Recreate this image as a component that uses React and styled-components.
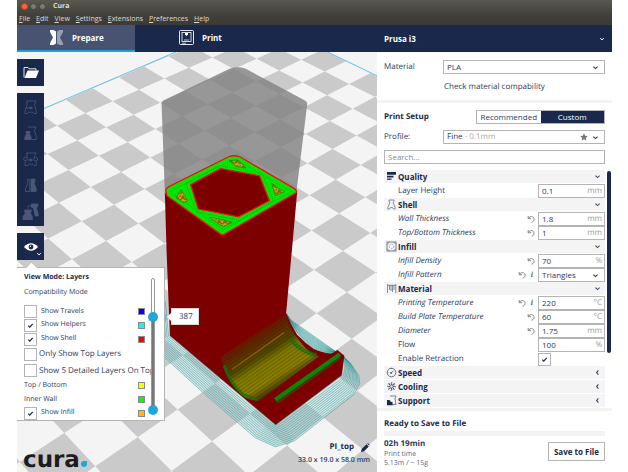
import React, { useState } from 'react';
import styled, { createGlobalStyle, css } from 'styled-components';

const navy = '#19284b';
const line = '#b4b4b4';

const Global = createGlobalStyle`
  * { box-sizing: border-box; }
  body { margin: 0; background: #fff; color: #2b3a5c; font: 8px/12px "Open Sans", "Noto Sans", sans-serif; text-rendering: geometricPrecision; }
  button, input, select { font: inherit; color: inherit; margin: 0; padding: 0; }
  svg { display: block; }
`;

const Window = styled.div`
  display: flex; flex-direction: column; min-height: 100vh; margin: 0 16px 0 17px;
`;
const TitleBar = styled.header`
  display: flex; align-items: center; gap: 2px; height: 13px; padding-left: 4px;
  background: linear-gradient(#5b594f, #45443d); color: #e2dfd8; font-weight: 700; font-size: 7px;
`;
const WindowButton = styled.button`
  width: 7px; height: 7px; border: 1px solid ${p => (p.$close ? '#c9421c' : '#45443e')}; border-radius: 50%;
  background: ${p => (p.$close ? '#f0683d' : '#7d7b72')};
`;
const AppName = styled.span` margin-left: 5px; `;
const MenuBar = styled.nav`
  display: flex; align-items: center; gap: 6px; height: 12px; padding-left: 2px;
  background: linear-gradient(#42413b, #3b3a36); color: #dfdbd2; font-size: 7px;
`;
const MenuItem = styled.button`
  border: 0; background: none; line-height: 12px;
  &::first-letter { text-decoration: underline; }
`;
const StageBar = styled.div`
  display: flex; height: 27px; background: ${navy}; color: #fff; font-weight: 700;
`;
const Tab = styled.button`
  display: flex; align-items: center; gap: ${p => (p.$active ? 9 : 8)}px; border: 0; font-weight: 700;
  width: 118px; padding-left: ${p => (p.$active ? 33 : 44)}px;
  background: ${p => (p.$active ? '#475371' : 'transparent')};
  border-bottom: 2px solid ${p => (p.$active ? '#1d9fda' : 'transparent')};
`;
const MachineButton = styled.button`
  display: flex; align-items: center; justify-content: space-between; width: 235px; margin-left: auto;
  padding: 0 7px; border: 0; background: none; font-weight: 700;
`;
const Main = styled.main` display: flex; flex: 1; `;

const Viewport = styled.section`
  position: relative; display: flex; flex-direction: column; flex: 1; min-width: 0; min-height: 420px;
  background: #f4f4f4; overflow: hidden;
`;
const Canvas = styled.svg` position: absolute; inset: 0; width: 100%; height: 100%; `;
const Overlay = styled.div`
  position: relative; display: flex; flex-direction: column; align-items: flex-start; gap: 7px; flex: 1; padding-top: 7px;
`;
const ToolGroup = styled.div` display: flex; flex-direction: column; padding: 1px 0 2px; background: ${navy}; `;
const ToolButton = styled.button`
  position: relative; display: flex; align-items: center; justify-content: center; width: 27px;
  height: ${p => (p.$main ? 27 : 26)}px; border: 0; background: ${navy}; color: ${p => (p.$main ? '#fff' : '#4b5775')};
`;
const Corner = styled.span` position: absolute; right: 2px; bottom: 3px; `;

const LayerRow = styled.div` display: flex; align-items: flex-start; `;
const LayerPanel = styled.section`
  position: relative; display: flex; width: 148px; height: 154px; background: #fff;
  border: 1px solid ${line}; border-left: 0;
  &::before {
    content: ''; position: absolute; left: 10px; top: -5px; width: 8px; height: 8px; background: #fff;
    border: 1px solid ${line}; border-width: 1px 0 0 1px; transform: rotate(45deg);
  }
`;
const LayerList = styled.div` display: flex; flex-direction: column; width: 134px; padding: 2px 0 0 7px; `;
const PanelTitle = styled.h2` margin: 0; font-size: 7px; line-height: 15px; color: ${navy}; `;
const PanelNote = styled.p` margin: 0 0 4px; font-size: 7px; line-height: 16px; `;
const LayerItem = styled.label`
  display: flex; align-items: center; gap: ${p => (p.$wide ? 2 : 4)}px; height: ${p => (p.$wide ? 17 : 14)}px;
  font-size: ${p => (p.$wide ? 8 : 7)}px; white-space: nowrap;
`;
const Swatch = styled.span`
  width: 7px; height: 7px; margin: 0 6px 0 auto; border: 1px solid #8a8a8a; background: ${p => p.$color};
`;
const Check = styled.input`
  appearance: none; flex: none; width: 13px; height: 13px; border: 1px solid ${line}; background: #fff;
  &:checked {
    background: #fff url('data:image/svg+xml,<svg xmlns="http://www.w3.org/2000/svg" viewBox="0 0 12 12"><path d="M3.5 6.200 5.200 7.800 8.400 4.200" fill="none" stroke="%2319284b" stroke-width="1.300"/></svg>') center / 11px 11px no-repeat;
  }
`;
const SliderBox = styled.div`
  position: relative; flex: none; width: 10px; height: 137px; margin: 10px 0 0 -3px;
  &::before {
    content: ''; position: absolute; inset: 0 3px 3px; border: 1px solid #999; border-radius: 2px;
    background: linear-gradient(#fff 0 38px, #777 38px);
  }
`;
const Range = styled.input`
  appearance: none; position: absolute; inset: 0; width: 10px; height: 100%; background: none;
  writing-mode: vertical-lr; direction: rtl; pointer-events: none;
  &::-webkit-slider-thumb {
    appearance: none; width: 10px; height: 10px; border-radius: 50%; background: #22a5dc; pointer-events: auto;
  }
`;
const LayerValue = styled.output`
  position: relative; margin: 41px 0 0 6px; padding: 0 7px; width: 28px; background: #fff; border: 1px solid #d8d8d8; line-height: 15px;
  &::before {
    content: ''; position: absolute; left: -5px; top: 3px; border: 5px solid transparent;
    border-left: 0; border-right-color: #fff;
  }
`;
const ViewFooter = styled.footer`
  display: flex; justify-content: space-between; align-items: flex-end; align-self: stretch; margin-top: auto; padding: 0 7px 2px 6px;
`;
const Logo = styled.div`
  display: flex; align-items: flex-end; font: 700 23px/24px "DejaVu Sans", sans-serif; color: #1c1c1e;
`;
const LogoDrop = styled.svg` margin: 0 0 5px 1px; `;
const ObjectInfo = styled.div`
  display: flex; flex-direction: column; align-items: flex-end; padding-bottom: 4px; font-size: 7px; font-weight: 600; line-height: 14px;
`;
const ObjectName = styled.span` display: flex; align-items: center; gap: 7px; font-size: 8px; font-weight: 700; color: ${navy}; `;

const Sidebar = styled.aside` display: flex; flex-direction: column; width: 235px; background: #fff; `;
const Block = styled.div`
  display: flex; flex-direction: column; padding: ${p => p.$pad}; gap: ${p => p.$gap || 0}px;
`;
const Divider = styled.hr` flex: none; width: 100%; height: 3px; margin: 0; border: 0; background: #f3f3f3; `;
const FieldRow = styled.div` display: flex; align-items: center; justify-content: space-between; height: 14px; `;
const fieldBox = css` border: 1px solid ${line}; background: #fff; border-radius: 0; `;
const Combo = styled.div` position: relative; display: flex; align-items: center; width: 162px; `;
const ComboSelect = styled.select`
  ${fieldBox} appearance: none; width: 100%; height: 14px; padding-left: 3px; color: ${p => (p.$pale ? 'transparent' : 'inherit')};
  option { color: #2b3a5c; }
`;
const ComboIcons = styled.span`
  position: absolute; right: 6px; display: flex; align-items: center; gap: 4px; pointer-events: none;
`;
const ComboText = styled.span`
  position: absolute; left: 4px; pointer-events: none;
  span { color: #aaa; }
`;
const TextLink = styled.a` margin-left: 60px; color: inherit; text-decoration: none; line-height: 14px; `;
const Heading = styled.h2` margin: 0; font-size: 8px; color: ${navy}; `;
const Segments = styled.div` display: flex; width: 129px; height: 14px; border: 1px solid ${line}; `;
const Segment = styled.button`
  flex: 1; border: 0; line-height: 12px; white-space: nowrap;
  background: ${p => (p.$on ? navy : '#fff')}; color: ${p => (p.$on ? '#fff' : 'inherit')};
`;
const Search = styled.input`
  ${fieldBox} width: 100%; height: 14px; padding: 0 3px 1px;
  &::placeholder { color: #888; }
`;
const SettingsArea = styled.div` display: flex; flex: 1; gap: 2px; padding: 0 1px 0 7px; `;
const Settings = styled.div` display: grid; grid-auto-rows: 1fr; flex: 1; `;
const Category = styled.button`
  display: flex; align-items: center; gap: 1px; border: 0; padding: 0 4px 0 2px; background: #f4f4f4;
  border-bottom: 1px solid #fff; color: ${navy}; font-weight: 700; line-height: 12px; text-align: left;
  > svg:last-child { margin-left: auto; color: #46536f; }
`;
const Setting = styled.div` display: flex; align-items: center; padding-left: 14px; `;
const SettingLabel = styled.label` flex: 1; font-style: ${p => (p.$changed ? 'italic' : 'normal')}; white-space: nowrap; `;
const IconButton = styled.button` display: flex; border: 0; background: none; margin-right: 3px; color: #777; `;
const Info = styled.span` margin: 0 5px 0 2px; font: italic 700 8px/12px "Liberation Serif", serif; color: #555; `;
const ValueBox = styled.div` position: relative; display: flex; align-items: center; align-self: stretch; width: 67px; `;
const ValueInput = styled.input` ${fieldBox} width: 100%; height: 100%; padding: 0 0 1px 3px; `;
const Unit = styled.span` position: absolute; right: 3px; color: #999; `;
const ScrollBar = styled.div` width: 4px; display: flex; flex-direction: column; padding-top: 1px; `;
const ScrollThumb = styled.div` height: 77%; border-radius: 2px; background: ${navy}; `;
const ProgressTrack = styled.div` height: 5px; background: #f3f3f3; `;
const FooterRow = styled.div` display: flex; justify-content: space-between; align-items: flex-start; `;
const Estimate = styled.div`
  display: flex; flex-direction: column; font-size: 7px; line-height: 9px; color: #5b6783;
  strong { font-size: 8px; line-height: 12px; color: #2b3a5c; }
`;
const SaveButton = styled.button`
  ${fieldBox} height: 19px; width: 57px; margin-top: 4px; font-weight: 700; color: ${navy}; white-space: nowrap;
`;

const Chevron = ({ left, size = 6 }) => (
  <svg width={size} height={size} viewBox="0 0 6 6" fill="none" stroke="currentColor" strokeWidth="1">
    <path d={left ? 'M3.800 1.200 2.200 3l1.600 1.800' : 'M1.200 2.200 3 3.900 4.800 2.200'} />
  </svg>
);
const Undo = () => (
  <svg width="8" height="8" viewBox="0 0 8 8" fill="none" stroke="currentColor" strokeWidth=".9">
    <path d="M1.200 1v2.700H4M1.400 3.500C2.300 1.800 4.200 1 5.800 2 8 3.500 7.200 6.600 4.600 7.200" />
  </svg>
);
const Star = () => (
  <svg width="8" height="8" viewBox="0 0 8 8" fill="#777">
    <path d="M4 .3l1.100 2.500 2.700.3-2 1.800.6 2.700L4 6.200 1.600 7.600l.6-2.700-2-1.800 2.700-.3z" />
  </svg>
);

const categoryIcons = {
  Quality: <path d="M1 1h9v2.800H1zM1 4.800h6.500v1.700H1zM1 7.500h4.500v1.300H1z" fill={navy} />,
  Shell: <path d="M3 1h5v1L7.200 4l2 4.500V10H7.500L6.500 8.500h-2L3.500 10H1.800V8.500l2-4.500L3 2z" fill="none" stroke="#69758f" strokeWidth=".8" />,
  Infill: (
    <g fill="none" stroke="#69758f">
      <rect x="1" y="1" width="9" height="9" strokeWidth=".9" />
      <circle cx="5.500" cy="5.500" r="2.300" strokeWidth=".6" strokeDasharray="1.500 1" />
      <path d="M1 3.500 3.500 1M10 3.500 7.500 1M1 7.500 3.500 10M10 7.500 7.500 10" strokeWidth=".8" />
    </g>
  ),
  Material: <path d="M1.500 1v9M3.500 2v5M5 2v6M6.500 2v7M8 2v5M9.800 1v9M2 2.300h8" fill="none" stroke="#69758f" strokeWidth=".8" />,
  Speed: (
    <g fill="none" stroke="#46536f">
      <circle cx="5.500" cy="5.500" r="4.300" strokeWidth=".8" />
      <path d="M5 6l2.500-2M5.500 1v1M1.300 5.500h1" strokeWidth=".8" />
      <circle cx="5" cy="6" r=".5" fill="#46536f" />
    </g>
  ),
  Cooling: (
    <g fill="none" stroke="#2f3d5e" strokeWidth="1">
      {[0, 45, 90, 135, 180, 225, 270, 315].map(a => (
        <path key={a} transform={`rotate(${a} 5.500 5.500)`} d="M5.500 4.300Q4.700 2.500 6 1.200" />
      ))}
    </g>
  ),
  Support: (
    <g>
      <path d="M4 1h6L9 3.500 10 9.500H6" fill="none" stroke="#69758f" strokeWidth=".9" />
      <path d="M1 5h2.500l1.500 2H6.500v3.200H1z" fill={navy} />
    </g>
  ),
};
const CategoryIcon = ({ name }) => (
  <svg width="11" height="11" viewBox="0 0 11 11">{categoryIcons[name]}</svg>
);

const Trapezoid = 'M4.500 2h9.500l-1.500 3.500 1.800 6.500v2.500h-2.500l-.8-1.300H6.500l-.8 1.300H3V12l2.200-6.500z';
const tools = [
  ['Move', <g key="m"><path d={Trapezoid} /><path d="M4 9h5M8 7.800 10.500 9 8 10.200z" fill="currentColor" /></g>],
  ['Scale', <g key="s"><path d="M6 2h8l-1.500 3.500 1.800 6.500v2.500H9.500" /><path d="M3.800 6.500h4.400L7.500 9l1.700 3.500v2H2.800v-2L4.500 9z" fill="currentColor" /></g>],
  ['Rotate', <g key="r"><path d={Trapezoid} /><path d="M6 9h3M8 7.800 10.500 9 8 10.200z" fill="currentColor" /><circle cx="3.500" cy="8" r="1.900" fill={navy} /><circle cx="13.700" cy="8" r="1.900" fill={navy} /></g>],
  ['Mirror', <g key="i"><path d="M7.800 2.500H5.500l.6 3.500L3.500 11.500v3h4.300z" /><path d="M9 2h4v2.500l-.8 2 2 5v3H9z" fill="currentColor" /></g>],
  ['Per model settings', <g key="p"><path d="M9 1h7v1.500l-1.500 2.500 1.700 6v2h-3L12 7.500 11.500 5 9 4z" fill="currentColor" /><path d="M6 6V3h4" /><path d="M2.500 7h7L8.500 10.500l1.800 3V17H1v-3.500l2.200-3z" fill="currentColor" /></g>],
];

const H = [-29.38, 18.023, 85.999, 9.986, 11.094, 112.934, -0.01945, -0.02313];
const project = (i, j) => {
  const w = H[6] * i + H[7] * j + 1;
  return [(H[0] * i + H[1] * j + H[2]) / w, (H[3] * i + H[4] * j + H[5]) / w].map(v => v.toFixed(1)).join(' ');
};
const tiles = [];
for (let i = -14; i < 14; i += 1) {
  for (let j = -6; j < 20; j += 1) {
    if ((i + j) % 2 === 0) {
      tiles.push(`M${project(i, j)}L${project(i + 1, j)}L${project(i + 1, j + 1)}L${project(i, j + 1)}Z`);
    }
  }
}

const brimInner = [[167, 300], [170, 334], [222, 379], [270, 419], [275, 423], [281, 419], [338, 377], [341, 374], [343, 366], [343, 356], [337, 349], [332, 351], [323, 352], [313, 348], [305, 342], [297, 333], [290, 322], [286, 312]];
const brimOuter = [[148, 300], [154, 346], [203, 391], [255, 436], [275, 445], [294, 439], [353, 393], [359, 382], [358, 374], [350, 362], [342, 355], [335, 350], [325, 343], [315, 336], [305, 329], [298, 324], [292, 320], [288, 316]];
const brimLines = Array.from({ length: 12 }, (_, n) =>
  'M' + brimInner.map(([x, y], k) => {
    const t = (n + 1) / 12;
    return `${(x + (brimOuter[k][0] - x) * t).toFixed(1)} ${(y + (brimOuter[k][1] - y) * t).toFixed(1)}`;
  }).join('L')
);

const infillPatches = [
  'M176 197 181 189 188 200 184 202z',
  'M229 160 238 159.500 246 167.500 236 166z',
  'M271 182 277 187 284 191 275 195z',
  'M209 216.500 219 218 232 221.500 223 226z',
];
const ramp = 'M221 355 285 313Q288 327 301 342 309 352 318 355L259 399Q247 400 238 390 225 375 221 355z';

function Scene() {
  return (
    <Canvas viewBox="17 52 360 420" preserveAspectRatio="xMidYMid slice" role="img" aria-label="Layer preview of PI_top">
      <defs>
        <clipPath id="plate"><path d="M17 120 176 52H327L377 76V472H17z" /></clipPath>
        <linearGradient id="ramp" gradientUnits="userSpaceOnUse" x1="240" y1="332" x2="278" y2="392">
          <stop offset="0" stopColor="#7d0000" />
          <stop offset=".2" stopColor="#5f2400" />
          <stop offset=".42" stopColor="#4a4a00" />
          <stop offset=".55" stopColor="#7b7b00" />
          <stop offset=".78" stopColor="#858000" />
          <stop offset=".92" stopColor="#464000" />
          <stop offset="1" stopColor="#7d0000" />
        </linearGradient>
        <pattern id="layers" width="4" height="3" patternUnits="userSpaceOnUse" patternTransform="rotate(-35)">
          <path d="M0 .5h4" stroke="#500" strokeOpacity=".35" strokeWidth=".7" />
        </pattern>
        <pattern id="grid" width="6" height="6" patternUnits="userSpaceOnUse">
          <rect width="6" height="6" fill="#7a6a08" />
          <path d="M0 6 3 0l3 6M0 2h6" fill="none" stroke="#dca01c" strokeWidth="1.200" />
        </pattern>
      </defs>
      <path clipPath="url(#plate)" d={tiles.join('')} fill="#cacaca" />
      <path d="M17 120 176 52M327 52 377 76" fill="none" stroke="#6cc5ec" strokeWidth="1" />
      <path d={brimLines[11] + 'L' + [...brimInner].reverse().map(p => p.join(' ')).join('L') + 'Z'} fill="#a9d2d2" fillOpacity=".4" />
      {brimLines.map(d => <path key={d} d={d} fill="none" stroke="#2b9494" strokeWidth=".6" strokeOpacity=".8" />)}
      <path d="M161.700 103Q162 101 164 100L230 68.500Q238 66 245 68.500L304 100Q307 101.500 306.700 104L295.700 193 222 234 165 192z" fill="#808080" fillOpacity=".8" />
      <path d="M165 192 166.700 250 170 334.500 275.300 423.300 341 374 343.700 354.300 336.700 348.700 332 351.500Q325 353 313.300 347.700 305 342 296.700 333.300 290 323 285.700 311.700L292.300 240 296.700 191 222.700 234z" fill="#7d0000" />
      <path d="M170 334.500 275.300 423.300 341 374" fill="none" stroke="#5a8f8f" strokeWidth=".6" />
      <path d={ramp} fill="url(#ramp)" />
      <path d="M224 364Q230 382 243 393L257 398" fill="none" stroke="#087c08" strokeWidth="3" strokeOpacity=".75" />
      <path d="M290 338Q300 350 316 354" fill="none" stroke="#087c08" strokeWidth="4" strokeOpacity=".7" />
      <path d="M232 368 284 331" stroke="#8a5a00" strokeWidth="1.500" />
      <path d={ramp} fill="url(#layers)" />
      <path d="M276 400 339 355" fill="none" stroke="#3f4400" strokeOpacity=".8" strokeWidth="5" />
      <path d="M275 398 339 353" fill="none" stroke="#068a06" strokeWidth="4" />
      <path d="M166 190Q165.500 188 169 186L228 156.500Q234 154 240 156.500L294 188Q297.500 190.500 295 192.500L224 233.500Q222 234.500 220 233L167 195z" fill="#04e504" stroke="#f01010" strokeWidth="1.300" />
      <path d="M170 191 229 161Q234 158.500 239 161L291 191 223 229zM219 165 186 183 196 211 239 219.500 273 200 262 173z" fill="none" stroke="#0aa50a" strokeWidth=".8" strokeDasharray="1 1" />
      {infillPatches.map(d => <path key={d} d={d} fill="url(#grid)" stroke="#0a9a0a" strokeWidth=".8" />)}
      <path d="M220.700 168 259.300 175.300 269 200 238.300 216 198.300 208.300 190.700 184z" fill="#7d0000" stroke="#f01010" strokeWidth="1.300" />
    </Canvas>
  );
}

const layerOptions = [
  ['Show Travels', '#0000ff', false],
  ['Show Helpers', '#00ffff', true],
  ['Show Shell', '#ff0000', true],
];

function LayerView() {
  const [top, setTop] = useState(387);
  const [bottom, setBottom] = useState(0);
  return (
    <LayerRow>
      <LayerPanel>
        <LayerList>
          <PanelTitle>View Mode: Layers</PanelTitle>
          <PanelNote>Compatibility Mode</PanelNote>
          {layerOptions.map(([text, color, on]) => (
            <LayerItem key={text}><Check type="checkbox" defaultChecked={on} />{text}<Swatch $color={color} /></LayerItem>
          ))}
          <LayerItem $wide><Check type="checkbox" />Only Show Top Layers</LayerItem>
          <LayerItem $wide><Check type="checkbox" />Show 5 Detailed Layers On Top</LayerItem>
          <LayerItem as="div">Top / Bottom<Swatch $color="#ffff00" /></LayerItem>
          <LayerItem as="div">Inner Wall<Swatch $color="#00ff00" /></LayerItem>
          <LayerItem><Check type="checkbox" defaultChecked />Show Infill<Swatch $color="#ffbf00" /></LayerItem>
        </LayerList>
        <SliderBox>
          <Range type="range" aria-label="Top layer" min="0" max="527" value={top} onChange={e => setTop(+e.target.value)} />
          <Range type="range" aria-label="Bottom layer" min="0" max="527" value={bottom} onChange={e => setBottom(+e.target.value)} />
        </SliderBox>
      </LayerPanel>
      <LayerValue>{top}</LayerValue>
    </LayerRow>
  );
}

const settings = [
  { category: 'Quality', open: true },
  { name: 'Layer Height', value: '0.1', unit: 'mm' },
  { category: 'Shell', open: true },
  { name: 'Wall Thickness', value: '1.8', unit: 'mm', changed: true },
  { name: 'Top/Bottom Thickness', value: '1', unit: 'mm', changed: true },
  { category: 'Infill', open: true },
  { name: 'Infill Density', value: '70', unit: '%', changed: true },
  { name: 'Infill Pattern', value: 'Triangles', kind: 'select', changed: true, info: true },
  { category: 'Material', open: true },
  { name: 'Printing Temperature', value: '220', unit: '°C', changed: true, info: true },
  { name: 'Build Plate Temperature', value: '60', unit: '°C', changed: true },
  { name: 'Diameter', value: '1.75', unit: 'mm', changed: true },
  { name: 'Flow', value: '100', unit: '%' },
  { name: 'Enable Retraction', kind: 'check' },
  { category: 'Speed' },
  { category: 'Cooling' },
  { category: 'Support' },
];

function SettingRow({ item }) {
  if (item.category) {
    return (
      <Category aria-expanded={!!item.open}>
        <CategoryIcon name={item.category} />{item.category}<Chevron left={!item.open} size={7} />
      </Category>
    );
  }
  const id = item.name.replace(/\W/g, '-').toLowerCase();
  return (
    <Setting>
      <SettingLabel htmlFor={id} $changed={item.changed}>{item.name}</SettingLabel>
      {item.changed && <IconButton aria-label={`Reset ${item.name}`}><Undo /></IconButton>}
      {item.info && <Info>i</Info>}
      <ValueBox>
        {item.kind === 'check' && <Check id={id} type="checkbox" defaultChecked />}
        {item.kind === 'select' && (
          <>
            <ComboSelect id={id}><option>{item.value}</option></ComboSelect>
            <ComboIcons><Chevron size={7} /></ComboIcons>
          </>
        )}
        {!item.kind && <><ValueInput id={id} defaultValue={item.value} /><Unit>{item.unit}</Unit></>}
      </ValueBox>
    </Setting>
  );
}

export default function App() {
  return (
    <Window>
      <Global />
      <TitleBar>
        <WindowButton $close aria-label="Close" />
        <WindowButton aria-label="Minimize" />
        <WindowButton aria-label="Maximize" />
        <AppName>Cura</AppName>
      </TitleBar>
      <MenuBar>
        {['File', 'Edit', 'View', 'Settings', 'Extensions', 'Preferences', 'Help'].map(m => <MenuItem key={m}>{m}</MenuItem>)}
      </MenuBar>
      <StageBar>
        <Tab $active>
          <svg width="13" height="15" viewBox="0 0 13 15">
            <path d="M0 0h3.500L6 1.500v12L3.500 15H0v-2l3-5.500L0 2z" fill="#fff" />
            <path d="M7 1.500 9.500 0H13v2l-3 5.500 3 5.500v2H9.500L7 13.500z" fill="#98a1b4" />
          </svg>
          Prepare
        </Tab>
        <Tab>
          <svg width="15" height="15" viewBox="0 0 15 15" fill="none" stroke="#e4e7ee">
            <rect x=".5" y=".5" width="14" height="14" rx="1" />
            <rect x="3" y="2.500" width="9" height="9" strokeWidth=".9" />
            <path d="M6 3h3v1.500L7.500 6 6 4.500z" fill="#fff" stroke="none" />
            <path d="M3 13.200h4M5 10h5" strokeWidth=".8" />
          </svg>
          Print
        </Tab>
        <MachineButton>Prusa i3<Chevron /></MachineButton>
      </StageBar>
      <Main>
        <Viewport>
          <Scene />
          <Overlay>
            <ToolButton $main aria-label="Open file">
              <svg width="16" height="13" viewBox="0 0 16 13">
                <path d="M1 11.500V1.500h4l1 1.300h7V4.500" fill="none" stroke="#fff" strokeWidth=".9" />
                <path d="M4.500 4.500H16l-3 7.500H1.500z" fill="#fff" />
              </svg>
            </ToolButton>
            <ToolGroup>
              {tools.map(([name, drawing]) => (
                <ToolButton key={name} aria-label={name}>
                  <svg width="17" height="17" viewBox="0 0 17 17" fill="none" stroke="currentColor" strokeWidth=".8">{drawing}</svg>
                </ToolButton>
              ))}
            </ToolGroup>
            <ToolButton $main aria-label="View mode">
              <svg width="14" height="8" viewBox="0 0 14 8">
                <path d="M0 4Q3 .3 7 .3T14 4Q11 7.700 7 7.700T0 4z" fill="#fff" />
                <circle cx="7" cy="4" r="2.400" fill={navy} />
                <circle cx="6.400" cy="3.300" r=".7" fill="#fff" />
              </svg>
              <Corner><Chevron /></Corner>
            </ToolButton>
            <LayerView />
            <ViewFooter>
              <Logo>
                cura
                <LogoDrop width="6" height="6" viewBox="0 0 6 6"><path d="M6 0v3a3 3 0 1 1-3-3z" fill="#22a5dc" /></LogoDrop>
              </Logo>
              <ObjectInfo>
                <ObjectName>
                  PI_top
                  <svg width="9" height="9" viewBox="0 0 9 9" fill={navy}><path d="M0 9l.7-3L5.500 1.200l2.300 2.300L3 8.300zM6.200.6Q7 0 8 .9T8.400 2.800z" /></svg>
                </ObjectName>
                <span>33.0 x 19.0 x 58.0 mm</span>
              </ObjectInfo>
            </ViewFooter>
          </Overlay>
        </Viewport>
        <Sidebar>
          <Block $pad="8px 7px 6px" $gap={6}>
            <FieldRow>
              <label htmlFor="material">Material</label>
              <Combo>
                <ComboSelect id="material"><option>PLA</option></ComboSelect>
                <ComboIcons><Chevron size={7} /></ComboIcons>
              </Combo>
            </FieldRow>
            <TextLink href="#compatibility">Check material compability</TextLink>
          </Block>
          <Divider />
          <Block $pad="7px 7px 6px" $gap={6}>
            <FieldRow>
              <Heading>Print Setup</Heading>
              <Segments>
                <Segment>Recommended</Segment>
                <Segment $on>Custom</Segment>
              </Segments>
            </FieldRow>
            <FieldRow>
              <label htmlFor="profile">Profile:</label>
              <Combo>
                <ComboSelect id="profile" $pale><option>Fine - 0.1mm</option></ComboSelect>
                <ComboText aria-hidden="true">Fine <span>- 0.1mm</span></ComboText>
                <ComboIcons><Star /><Chevron size={7} /></ComboIcons>
              </Combo>
            </FieldRow>
            <Search type="text" placeholder="Search..." aria-label="Search settings" />
          </Block>
          <SettingsArea>
            <Settings>{settings.map(s => <SettingRow key={s.category || s.name} item={s} />)}</Settings>
            <ScrollBar><ScrollThumb /></ScrollBar>
          </SettingsArea>
          <Divider />
          <Block $pad="7px 7px 6px" $gap={1}>
            <Heading>Ready to Save to File</Heading>
            <ProgressTrack />
            <Block $pad="1px 0 0">
              <FooterRow>
                <Estimate><strong>02h 19min</strong><span>Print time</span><span>5.13m / ~ 15g</span></Estimate>
                <SaveButton>Save to File</SaveButton>
              </FooterRow>
            </Block>
          </Block>
        </Sidebar>
      </Main>
    </Window>
  );
}
